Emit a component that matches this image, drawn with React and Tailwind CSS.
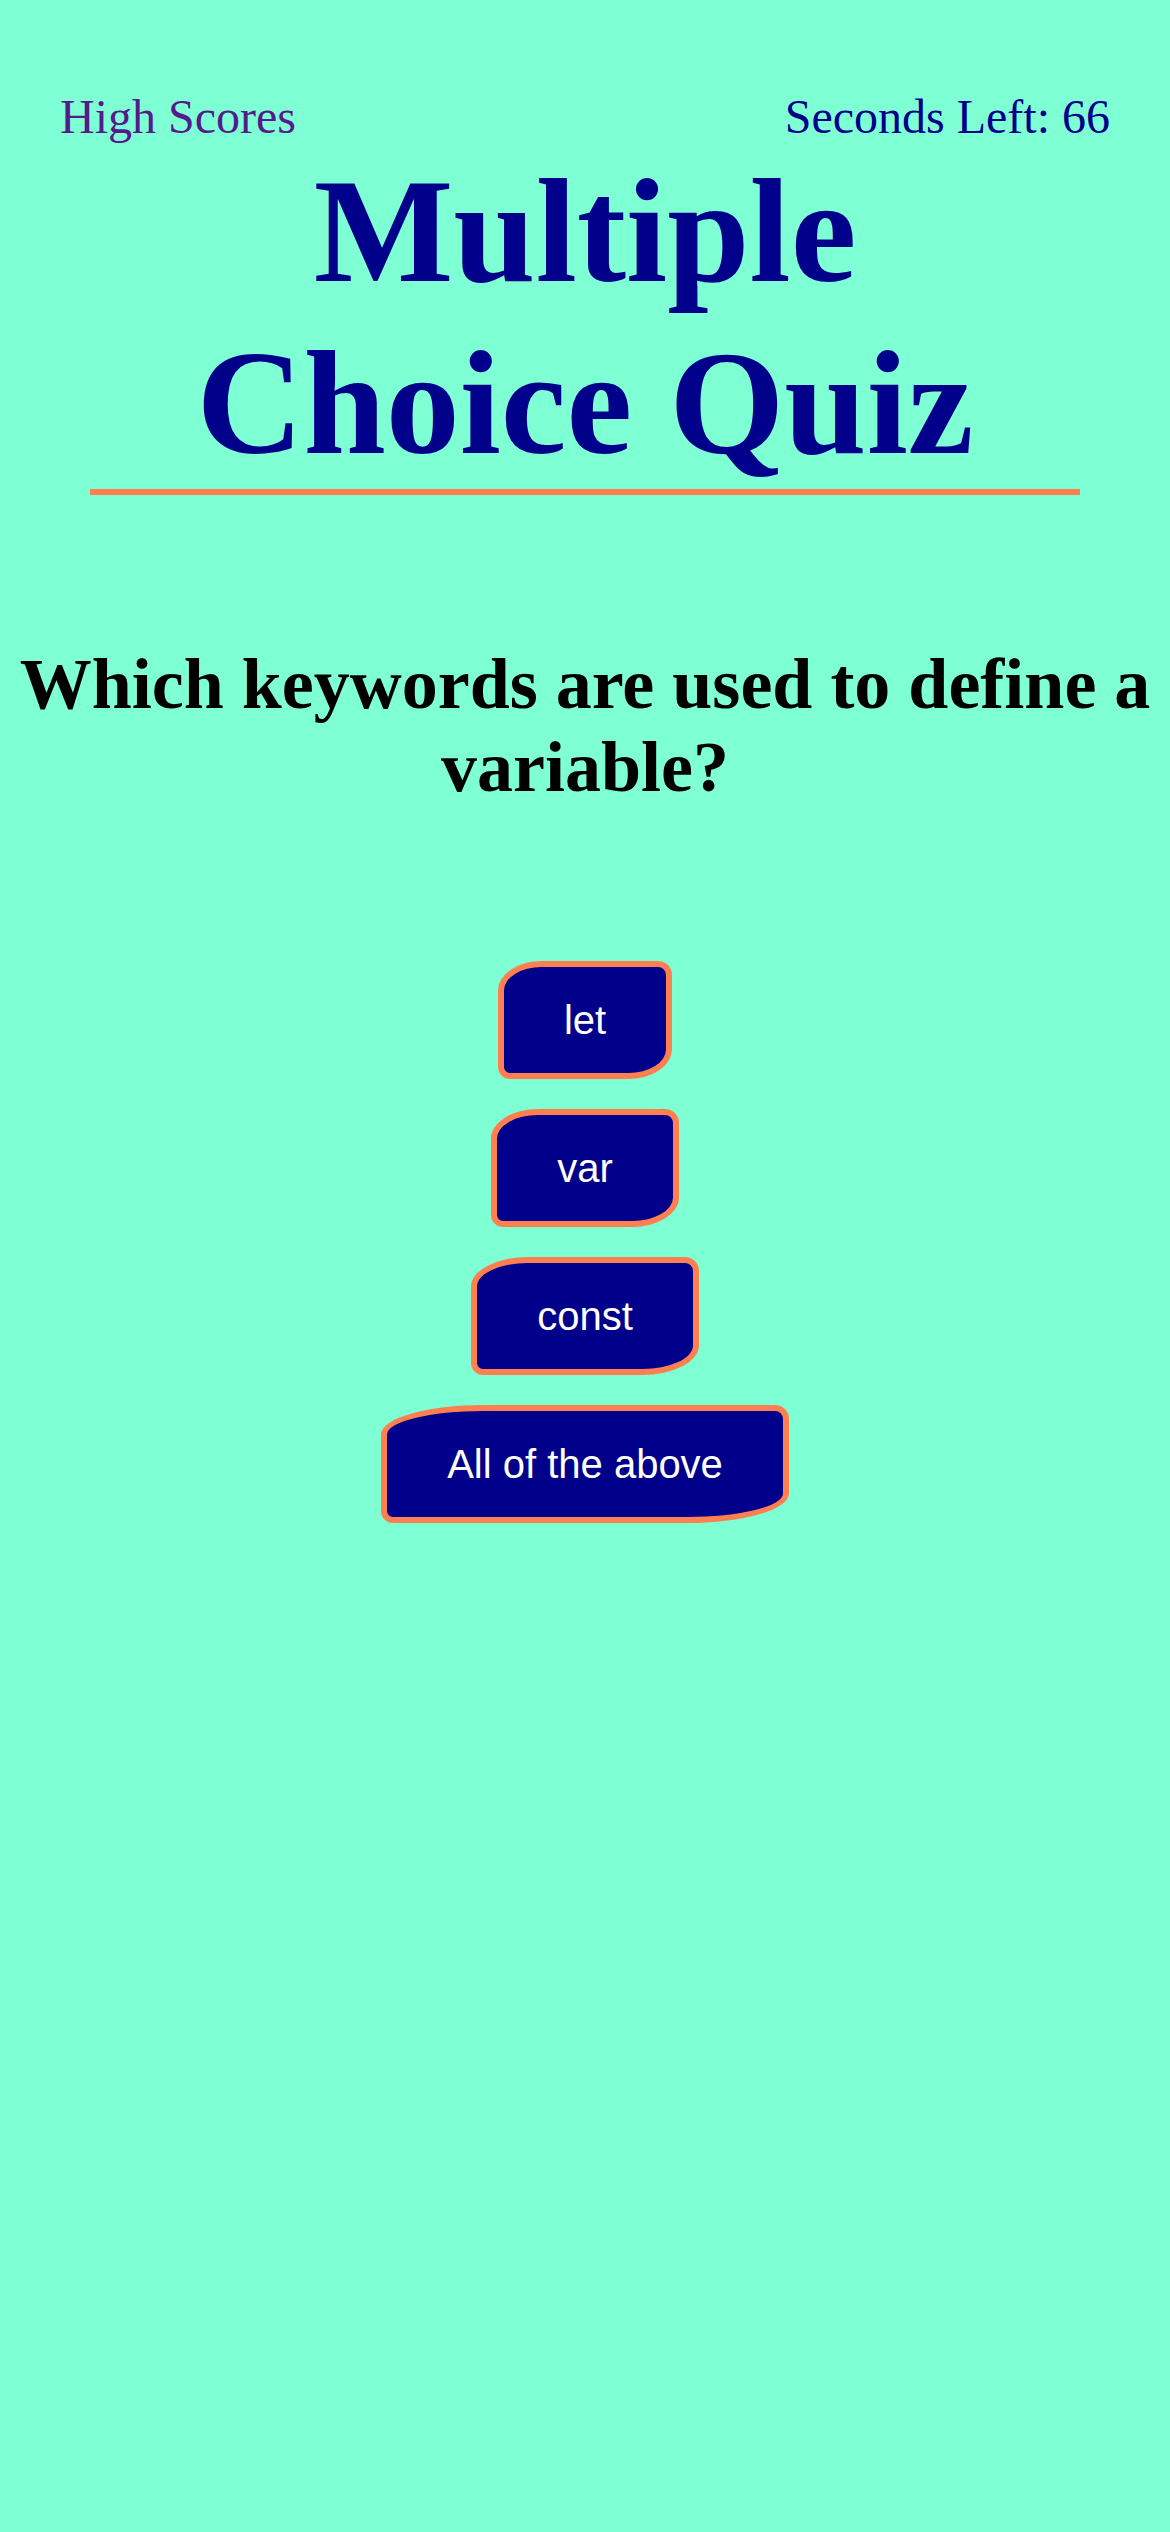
export default function App() {
  const answers = ["let", "var", "const", "All of the above"];
  return (
    <div
      className="min-h-screen w-full bg-[#7FFFD4]"
      style={{ fontFamily: '"Liberation Serif", "Times New Roman", serif' }}
    >
      <header className="flex justify-between px-[60px] pt-[90px] text-[48px] leading-[53px]">
        <a className="text-[#551A8B] cursor-pointer">High Scores</a>
        <span className="text-[#00008B]">Seconds Left: 66</span>
      </header>
      <h1 className="mx-[90px] mt-[2px] border-b-[6px] border-[#FF7F50] text-center text-[148px] font-bold leading-[172px] text-[#00008B]">
        Multiple Choice Quiz
      </h1>
      <h2 className="mt-[148px] text-center text-[72px] font-bold leading-[83px] text-black">
        Which keywords are used to define a variable?
      </h2>
      <div className="mt-[152px] flex flex-col items-center gap-[30px]">
        {answers.map((a) => (
          <button
            key={a}
            className="rounded-[25%_14px_25%_12px] border-[6px] border-[#FF7F50] bg-[#00008B] px-[60px] py-[30px] text-[40px] leading-[46px] text-white"
            style={{ fontFamily: '"Liberation Sans", Arial, sans-serif' }}
          >
            {a}
          </button>
        ))}
      </div>
    </div>
  );
}
